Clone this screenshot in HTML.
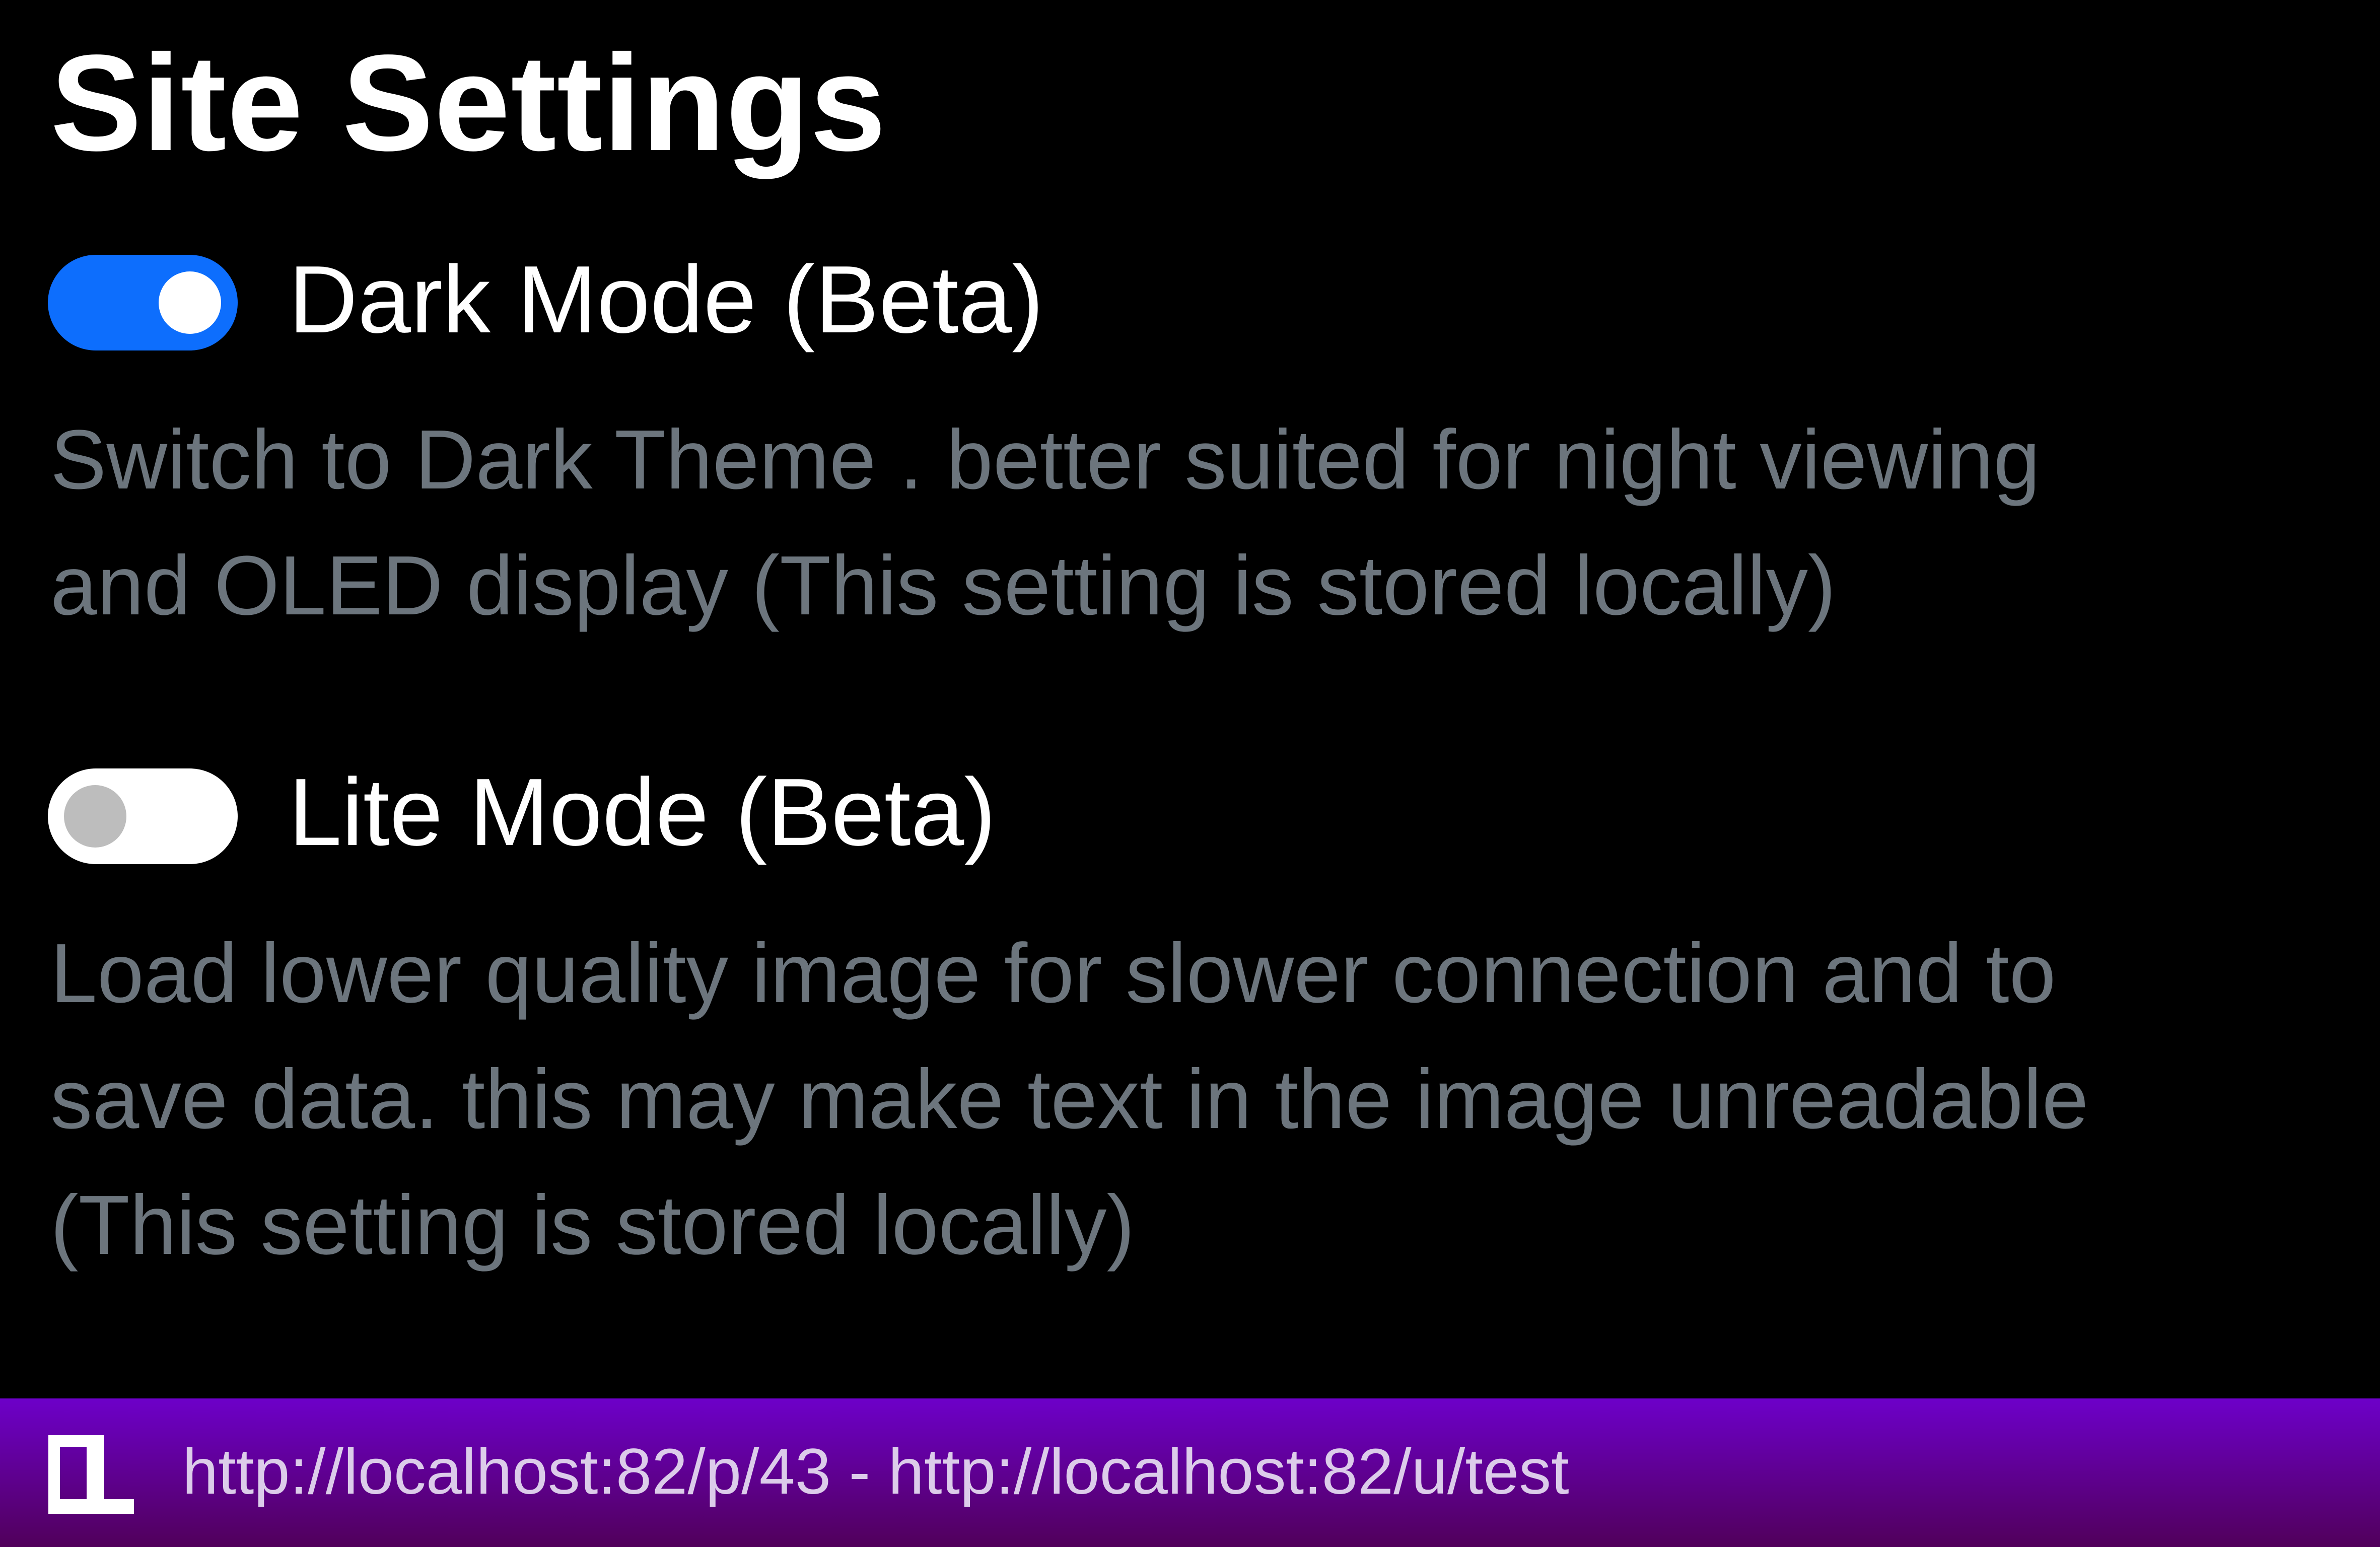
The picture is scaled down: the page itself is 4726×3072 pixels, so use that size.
<!DOCTYPE html>
<html><head><meta charset="utf-8"><style>
html,body{margin:0;padding:0;}
body{width:4726px;height:3072px;background:#000;position:relative;overflow:hidden;font-family:"Liberation Sans",sans-serif;}
.t{position:absolute;white-space:nowrap;line-height:1;}
h1{position:absolute;margin:0;left:100px;top:68px;font-size:272px;font-weight:bold;color:#fff;line-height:1;white-space:nowrap;letter-spacing:1px;}
.lab{color:#fff;font-size:190px;left:573px;}
.d{color:#6c757d;font-size:167px;left:100px;}
.tg{position:absolute;left:95px;width:377px;height:190px;border-radius:95px;}
.k{position:absolute;width:124px;height:124px;border-radius:50%;top:33px;}
.bar{position:absolute;left:0;top:2777px;width:4726px;height:295px;background:linear-gradient(#6d00c9,#51005b);}
</style></head><body>
<h1>Site Settings</h1>

<div class="tg" style="top:506px;background:#0d6efd;"><div class="k" style="left:220px;background:#fff;"></div></div>
<div class="t lab" style="top:500px;">Dark Mode (Beta)</div>
<div class="t d" style="top:830px;">Switch to Dark Theme . better suited for night viewing</div>
<div class="t d" style="top:1080px;">and OLED display (This setting is stored locally)</div>

<div class="tg" style="top:1526px;background:#fff;"><div class="k" style="left:32px;background:#bdbdbd;"></div></div>
<div class="t lab" style="top:1518px;">Lite Mode (Beta)</div>
<div class="t d" style="top:1850px;">Load lower quality image for slower connection and to</div>
<div class="t d" style="top:2100px;">save data. this may make text in the image unreadable</div>
<div class="t d" style="top:2350px;">(This setting is stored locally)</div>

<div class="bar">
<svg style="position:absolute;left:96px;top:73px" width="170" height="156" viewBox="0 0 170 156">
<path d="M0 0H111V127H170V156H0Z M23 23V127H76V23Z" fill="#fff" fill-rule="evenodd"/>
</svg>
<div class="t" style="left:362px;top:82px;font-size:128px;color:#dcccea;">http://localhost:82/p/43 - http://localhost:82/u/test</div>
</div>
</body></html>
